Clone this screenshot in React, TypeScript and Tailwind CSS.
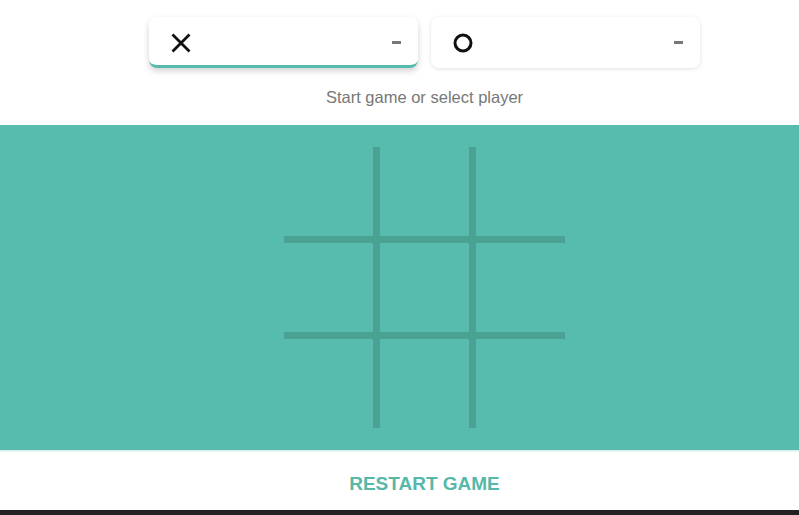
import React, { useState } from 'react';

type Player = 'x' | 'o';

const font = { fontFamily: '"Liberation Sans", Arial, sans-serif' };

const Cross = () => (
  <svg width="20" height="20" viewBox="0 0 20 20" className="block">
    <path d="M1.5 1.5 L18.5 18.5 M18.5 1.5 L1.5 18.5" stroke="#111" strokeWidth="2.8" strokeLinecap="butt" />
  </svg>
);

const Circle = () => (
  <svg width="20" height="20" viewBox="0 0 20 20" className="block">
    <circle cx="10" cy="10" r="8" fill="none" stroke="#111" strokeWidth="3" />
  </svg>
);

type PlayerCardProps = {
  player: Player;
  active: boolean;
  onSelect: (p: Player) => void;
};

const PlayerCard: React.FC<PlayerCardProps> = ({ player, active, onSelect }) => (
  <button
    type="button"
    onClick={() => onSelect(player)}
    className={
      active
        ? 'flex h-[51px] w-[269px] items-center justify-between rounded-lg border-b-[3px] border-[#56baad] bg-white pl-[22px] pr-[17px] shadow-[0_3px_6px_rgba(0,0,0,0.18)]'
        : 'flex h-[51px] w-[269px] items-center justify-between rounded-lg bg-white pl-[22px] pr-[17px] shadow-[0_1px_4px_rgba(0,0,0,0.12)]'
    }
  >
    <span className={active ? 'mt-[3px]' : ''}>{player === 'x' ? <Cross /> : <Circle />}</span>
    <span className={active ? 'mt-[3px] h-[3px] w-[9px] bg-[#777]' : 'h-[3px] w-[9px] bg-[#777]'} />
  </button>
);

export default function App() {
  const [turn, setTurn] = useState<Player>('x');
  const [cells, setCells] = useState<(Player | null)[]>(Array(9).fill(null));

  const play = (i: number) => {
    if (cells[i]) return;
    const next = cells.slice();
    next[i] = turn;
    setCells(next);
    setTurn(turn === 'x' ? 'o' : 'x');
  };

  return (
    <div className="h-[515px] w-[799px] overflow-hidden bg-white" style={font}>
      <div className="flex w-[849px] flex-col items-center">
        <div className="mt-[17px] flex gap-[13px]">
          <PlayerCard player="x" active={turn === 'x'} onSelect={setTurn} />
          <PlayerCard player="o" active={turn === 'o'} onSelect={setTurn} />
        </div>
        <p className="mt-[20px] text-[16.5px] leading-[19px] text-[#777]">Start game or select player</p>

        <div className="mt-[18px] flex h-[325px] w-full items-center justify-center bg-[#57bbad] shadow-[0_1px_2px_rgba(86,186,173,0.35)]">
          <div className="grid h-[281px] w-[281px] grid-cols-3 grid-rows-3 gap-[7px] bg-[#4aa392]">
            {cells.map((c, i) => (
              <button
                key={i}
                type="button"
                onClick={() => play(i)}
                className="flex items-center justify-center bg-[#57bbad]"
              >
                {c === 'x' && <Cross />}
                {c === 'o' && <Circle />}
              </button>
            ))}
          </div>
        </div>

        <div className="flex h-[60px] w-full items-center justify-center">
          <button
            type="button"
            onClick={() => setCells(Array(9).fill(null))}
            className="mt-[6px] text-[19px] font-bold leading-none text-[#56b8a8]"
          >
            RESTART GAME
          </button>
        </div>
        <div className="h-[5px] w-full bg-[#222]" />
      </div>
    </div>
  );
}
